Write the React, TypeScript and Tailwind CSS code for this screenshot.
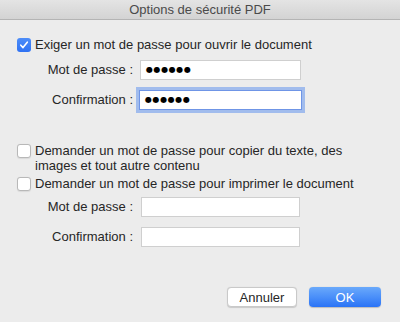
import React from "react";

const font = { fontFamily: "'Liberation Sans', Arial, sans-serif" };

function Check({ checked }: { checked?: boolean }) {
  if (checked) {
    return (
      <span className="w-[14px] h-[14px] rounded-[3px] bg-gradient-to-b from-[#4d8df8] to-[#2f72f3] flex items-center justify-center shrink-0">
        <svg width="10" height="10" viewBox="0 0 10 10">
          <path d="M1.8 5.2 L4 7.6 L8.3 2.2" fill="none" stroke="white" strokeWidth="1.6" strokeLinecap="round" strokeLinejoin="round" />
        </svg>
      </span>
    );
  }
  return <span className="block w-[14px] h-[14px] rounded-[3px] bg-white border border-[#b8b8b8] shrink-0 shadow-[0_0.5px_1px_rgba(0,0,0,0.08)]" />;
}

function Field({ label, dots, focused, labelW, inputW, gap }: { label: string; dots?: boolean; focused?: boolean; labelW: string; inputW: string; gap: string }) {
  return (
    <div className={`flex items-center h-[20px] ${gap}`}>
      <span className={`${labelW} text-right text-[13px] text-[#262626]`}>{label}</span>
      <div
        className={`${inputW} h-[20px] bg-white flex items-center pl-[5px] ${
          focused ? "border border-[#6f95e6] ring-[3px] ring-[#8fb0ee]/80" : "border border-[#cfcfcf]"
        }`}
      >
        {dots && (
          <span className="text-[8px] tracking-[0.6px] text-black leading-none" style={{ fontFamily: "'DejaVu Sans', sans-serif" }}>
            ●●●●●●
          </span>
        )}
      </div>
    </div>
  );
}

export default function App() {
  return (
    <div className="w-[400px] h-[322px] bg-[#ececec] overflow-hidden" style={font}>
      <div className="h-[20px] bg-gradient-to-b from-[#e4e4e4] to-[#d3d3d3] border-b border-[#b4b4b4] flex items-center justify-center text-[13px] text-[#4a4a4a]">
        Options de sécurité PDF
      </div>
      <div className="pl-[17px] pt-[18px] text-[13px] text-[#262626]">
        <div className="flex items-center gap-[4px] h-[14px]">
          <Check checked />
          <span>Exiger un mot de passe pour ouvrir le document</span>
        </div>
        <div className="mt-[8px]">
          <Field label="Mot de passe :" dots labelW="w-[116px]" inputW="w-[161px]" gap="gap-[7px]" />
        </div>
        <div className="mt-[10px]">
          <Field label="Confirmation :" dots focused labelW="w-[116px]" inputW="w-[163px]" gap="gap-[6px]" />
        </div>
        <div className="mt-[33px] flex gap-[4px] leading-[15px]">
          <span className="mt-[1px] shrink-0">
            <Check />
          </span>
          <span className="w-[330px]">Demander un mot de passe pour copier du texte, des images et tout autre contenu</span>
        </div>
        <div className="mt-[3px] flex items-center gap-[4px] h-[15px]">
          <Check />
          <span>Demander un mot de passe pour imprimer le document</span>
        </div>
        <div className="mt-[6px]">
          <Field label="Mot de passe :" labelW="w-[116px]" inputW="w-[159px]" gap="gap-[8px]" />
        </div>
        <div className="mt-[10px]">
          <Field label="Confirmation :" labelW="w-[116px]" inputW="w-[159px]" gap="gap-[8px]" />
        </div>
      </div>
      <div className="mt-[40px] flex justify-end gap-[12px] pr-[19px] text-[13px]">
        <button className="w-[70px] h-[20px] rounded-[4px] bg-white border border-[#c9c9c9] shadow-[0_0.5px_1px_rgba(0,0,0,0.15)] text-[#262626] leading-none">
          Annuler
        </button>
        <button className="w-[72px] h-[20px] rounded-[4px] bg-gradient-to-b from-[#6aa9fb] to-[#2a73f6] text-white leading-none shadow-[0_0.5px_1px_rgba(0,0,0,0.2)]">
          OK
        </button>
      </div>
    </div>
  );
}
